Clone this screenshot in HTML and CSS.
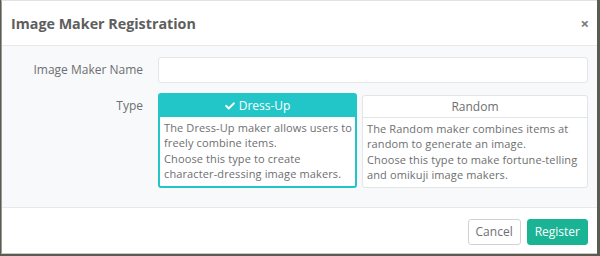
FILE: index.html
```html
<!DOCTYPE html>
<html lang="en">
<head>
    <meta charset="UTF-8">
    <title>Image Maker Registration</title>
    <link rel="stylesheet" href="styles.css">
</head>
<body>

    <div class="modal">
        <div class="modal-header">
            <h4>Image Maker Registration</h4>
            <span class="close">&times;</span>
        </div>

        <div class="modal-body">
            <div class="form-row">
                <label for="maker-name">Image Maker Name</label>
                <input type="text" id="maker-name" class="form-control">
            </div>

            <div class="form-row">
                <label>Type</label>
                <div class="type-list">
                    <div class="type-card selected">
                        <div class="type-head">
                            <svg class="check" viewBox="0 0 512 512" width="10" height="10"><path d="M173.9 439.4 7.5 273c-10-10-10-26.2 0-36.2l36.2-36.2c10-10 26.2-10 36.2 0L192 312.7 432.1 72.6c10-10 26.2-10 36.2 0l36.2 36.2c10 10 10 26.2 0 36.2L210.1 439.4c-10 10-26.2 10-36.2 0z" fill="currentColor"/></svg>
                            Dress-Up
                        </div>
                        <div class="type-text">
                            The Dress-Up maker allows users to<br>
                            freely combine items.<br>
                            Choose this type to create<br>
                            character-dressing image makers.
                        </div>
                    </div>
                    <div class="type-card">
                        <div class="type-head">Random</div>
                        <div class="type-text">
                            The Random maker combines items at<br>
                            random to generate an image.<br>
                            Choose this type to make fortune-telling<br>
                            and omikuji image makers.
                        </div>
                    </div>
                </div>
            </div>
        </div>

        <div class="modal-footer">
            <button class="btn btn-white">Cancel</button>
            <button class="btn btn-primary">Register</button>
        </div>
    </div>

</body>
</html>
```

FILE: styles.css
```css
:root {
    --text: #6d6f71;
    --primary: #1ab394;
    --info: #23c6c8;
    --line: #e7eaec;
}

body {
    margin: 0;
    background-color: #5c5b4f;
    font-family: "Open Sans", sans-serif;
    font-size: 12px;
    color: var(--text);
}

.modal {
    background-color: #fff;
    width: 596px;
    height: 254px;
    margin-left: 1px;
    border-left: 1px solid #9a9a9a;
    border-bottom: 1px solid #c9c9c9;
    border-top: 1px solid #e2e2e2;
    box-sizing: border-box;
    display: flex;
    flex-direction: column;
}

.modal-header {
    height: 44px;
    padding: 0 8px 0 9px;
    display: flex;
    align-items: center;
    justify-content: space-between;
    border-bottom: 1px solid var(--line);
}

.modal-header h4 {
    margin: 0;
    font-size: 14.3px;
    font-weight: 700;
    color: #5e5e5e;
}

.close {
    font-size: 15px;
    font-weight: 700;
    color: #7a7a7a;
}

.modal-body {
    background-color: #f8f9fa;
    padding: 11px 9px 0 0;
    height: 162px;
    box-sizing: border-box;
    border-bottom: 1px solid var(--line);
}

.form-row {
    display: grid;
    grid-template-columns: 141px 1fr;
    column-gap: 15px;
    margin-bottom: 10px;
}

.form-row label {
    text-align: right;
    line-height: 26px;
}

.form-control {
    height: 26px;
    border: 1px solid #e5e6e7;
    border-radius: 3px;
    background-color: #fff;
    box-sizing: border-box;
    padding: 4px 8px;
    font: inherit;
}

.type-list {
    display: grid;
    grid-template-columns: 199px 1fr;
    column-gap: 5px;
    align-items: start;
}

.type-card {
    background-color: #fff;
    border: 1px solid #e2e4e6;
    border-radius: 3px;
    margin-top: 2px;
}

.type-card.selected {
    border: 2px solid var(--info);
    margin-top: 0;
}

.type-head {
    height: 21px;
    line-height: 21px;
    text-align: center;
    border-bottom: 1px solid #e2e4e6;
}

.selected .type-head {
    background-color: var(--info);
    color: #fff;
    height: 22px;
    line-height: 22px;
    border-bottom: none;
}

.check {
    vertical-align: -1px;
    margin-right: 1px;
}

.type-text {
    padding: 3px 4px 5px;
    font-size: 11px;
    letter-spacing: 0.12px;
    line-height: 15.3px;
    white-space: nowrap;
}

.modal-footer {
    flex: 1;
    display: flex;
    justify-content: flex-end;
    align-items: center;
    gap: 6px;
    padding: 2px 9px 0 0;
}

.btn {
    height: 26px;
    padding: 0 7px;
    border-radius: 3px;
    font: inherit;
    cursor: pointer;
}

.btn-white {
    background-color: #fff;
    border: 1px solid #d2d2d2;
    color: var(--text);
}

.btn-primary {
    background-color: var(--primary);
    border: 1px solid var(--primary);
    color: #fff;
}
```
